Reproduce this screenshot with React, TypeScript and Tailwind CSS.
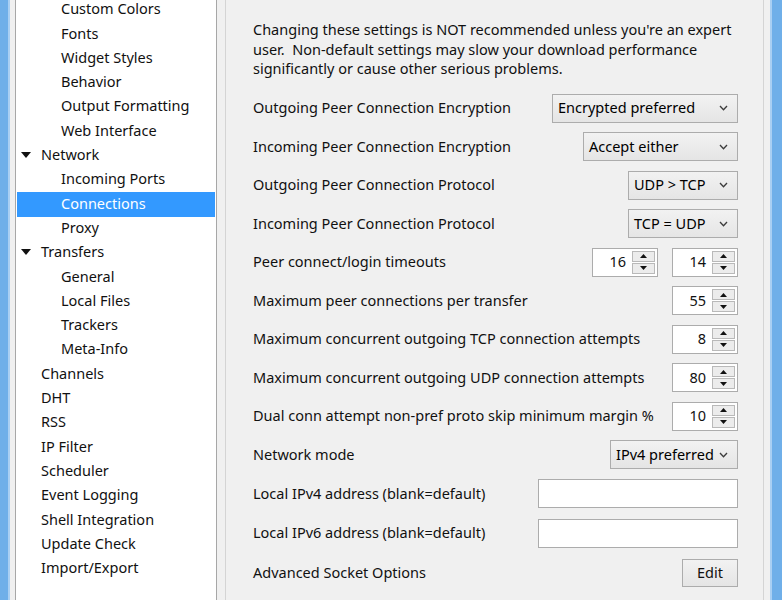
import React from 'react';

type TreeItem = { label: string; level: 0 | 1 | 2; open?: boolean; selected?: boolean };

const tree: TreeItem[] = [
  { label: 'Custom Colors', level: 2 },
  { label: 'Fonts', level: 2 },
  { label: 'Widget Styles', level: 2 },
  { label: 'Behavior', level: 2 },
  { label: 'Output Formatting', level: 2 },
  { label: 'Web Interface', level: 2 },
  { label: 'Network', level: 1, open: true },
  { label: 'Incoming Ports', level: 2 },
  { label: 'Connections', level: 2, selected: true },
  { label: 'Proxy', level: 2 },
  { label: 'Transfers', level: 1, open: true },
  { label: 'General', level: 2 },
  { label: 'Local Files', level: 2 },
  { label: 'Trackers', level: 2 },
  { label: 'Meta-Info', level: 2 },
  { label: 'Channels', level: 1 },
  { label: 'DHT', level: 1 },
  { label: 'RSS', level: 1 },
  { label: 'IP Filter', level: 1 },
  { label: 'Scheduler', level: 1 },
  { label: 'Event Logging', level: 1 },
  { label: 'Shell Integration', level: 1 },
  { label: 'Update Check', level: 1 },
  { label: 'Import/Export', level: 1 },
];

function Chevron() {
  return (
    <svg width="9" height="6" viewBox="0 0 9 6" className="shrink-0">
      <path d="M1 1 L4.5 4.8 L8 1" fill="none" stroke="#3c3c3c" strokeWidth="1.3" />
    </svg>
  );
}

function Select({ value, width }: { value: string; width: string }) {
  return (
    <div
      className={`${width} h-[29px] flex items-center justify-between pl-[5px] pr-[9px] border border-[#acacac] bg-gradient-to-b from-[#f2f2f2] to-[#e5e5e5] text-[#000]`}
    >
      <span className="whitespace-nowrap">{value}</span>
      <Chevron />
    </div>
  );
}

function Tri({ up }: { up?: boolean }) {
  return (
    <svg width="7" height="4" viewBox="0 0 7 4">
      <path d={up ? 'M0 4 L3.5 0 L7 4 Z' : 'M0 0 L3.5 4 L7 0 Z'} fill="#111" />
    </svg>
  );
}

function Spin({ value }: { value: string }) {
  return (
    <div className="w-[66px] h-[29px] flex border border-[#acacac] bg-white">
      <div className="w-[39px] flex items-center justify-end pr-[6px]">{value}</div>
      <div className="flex-1 flex flex-col gap-[1px] p-[2px] pl-0">
        <div className="flex-1 flex items-center justify-center border border-[#b9b9b9] bg-[#ececec]">
          <Tri up />
        </div>
        <div className="flex-1 flex items-center justify-center border border-[#b9b9b9] bg-[#ececec]">
          <Tri />
        </div>
      </div>
    </div>
  );
}

function TextBox() {
  return <div className="w-[200px] h-[29px] border border-[#acacac] bg-white" />;
}

function Row({ label, children, tall }: { label: string; children: React.ReactNode; tall?: boolean }) {
  return (
    <div className={`${tall ? 'h-[39.5px]' : 'h-[38.5px]'} flex items-center justify-between`}>
      <span className="whitespace-nowrap">{label}</span>
      <div className="flex items-center gap-[14px]">{children}</div>
    </div>
  );
}

export default function App() {
  return (
    <div
      className="w-[782px] h-[600px] overflow-hidden flex bg-[#f0f0f0] text-[14.5px] text-[#111]"
      style={{ fontFamily: '"Noto Sans", "Open Sans", sans-serif' }}
    >
      {/* window frame left */}
      <div className="w-[8px] shrink-0 bg-[#6fafe9]" />
      <div className="w-[2px] shrink-0 bg-[#a9cff3]" />
      <div className="w-[5px] shrink-0" />

      {/* tree */}
      <div className="w-[202px] shrink-0 h-[640px] -mt-[20px] border border-[#a7a7a7] bg-white pt-[17px] pl-[1px] pr-[1px]">
        {tree.map((t) => (
          <div
            key={t.label}
            className={`h-[24.3px] flex items-center pb-[2px] ${t.selected ? 'bg-[#3399ff] text-white' : ''}`}
          >
            {t.level === 1 ? (
              <div className="w-[24px] pl-[4px] flex items-center">
                {t.open && (
                  <svg width="10" height="6" viewBox="0 0 10 6">
                    <path d="M0 0 L10 0 L5 6 Z" fill="#111" />
                  </svg>
                )}
              </div>
            ) : (
              <div className="w-[44px]" />
            )}
            <span className="whitespace-nowrap">{t.label}</span>
          </div>
        ))}
      </div>

      <div className="w-[8px] shrink-0" />

      {/* group box */}
      <div className="w-[539px] shrink-0 h-[640px] -mt-[20px] border-l border-r border-[#d4d4d4] pl-[27px] pr-[25px] pt-[40px]">
        <p className="leading-[19.5px] -mr-[20px]">
          Changing these settings is NOT recommended unless you're an expert user.&nbsp; Non-default settings may slow your download performance significantly or cause other serious problems.
        </p>
        <div className="mt-[10.5px]">
          <Row label="Outgoing Peer Connection Encryption">
            <Select value="Encrypted preferred" width="w-[186px]" />
          </Row>
          <Row label="Incoming Peer Connection Encryption">
            <Select value="Accept either" width="w-[155px]" />
          </Row>
          <Row label="Outgoing Peer Connection Protocol">
            <Select value="UDP > TCP" width="w-[110px]" />
          </Row>
          <Row label="Incoming Peer Connection Protocol">
            <Select value="TCP = UDP" width="w-[110px]" />
          </Row>
          <Row label="Peer connect/login timeouts">
            <Spin value="16" />
            <Spin value="14" />
          </Row>
          <Row label="Maximum peer connections per transfer">
            <Spin value="55" />
          </Row>
          <Row label="Maximum concurrent outgoing TCP connection attempts">
            <Spin value="8" />
          </Row>
          <Row label="Maximum concurrent outgoing UDP connection attempts">
            <Spin value="80" />
          </Row>
          <Row label="Dual conn attempt non-pref proto skip minimum margin %">
            <Spin value="10" />
          </Row>
          <Row label="Network mode">
            <Select value="IPv4 preferred" width="w-[128px]" />
          </Row>
          <Row label="Local IPv4 address (blank=default)" tall>
            <TextBox />
          </Row>
          <Row label="Local IPv6 address (blank=default)" tall>
            <TextBox />
          </Row>
          <Row label="Advanced Socket Options" tall>
            <div className="w-[56px] h-[28px] flex items-center justify-center border border-[#acacac] bg-gradient-to-b from-[#f2f2f2] to-[#e5e5e5]">
              Edit
            </div>
          </Row>
        </div>
      </div>

      {/* window frame right */}
      <div className="w-[6px] shrink-0" />
      <div className="w-[2px] shrink-0 bg-[#a9cff3]" />
      <div className="flex-1 bg-[#6fafe9]" />
    </div>
  );
}
